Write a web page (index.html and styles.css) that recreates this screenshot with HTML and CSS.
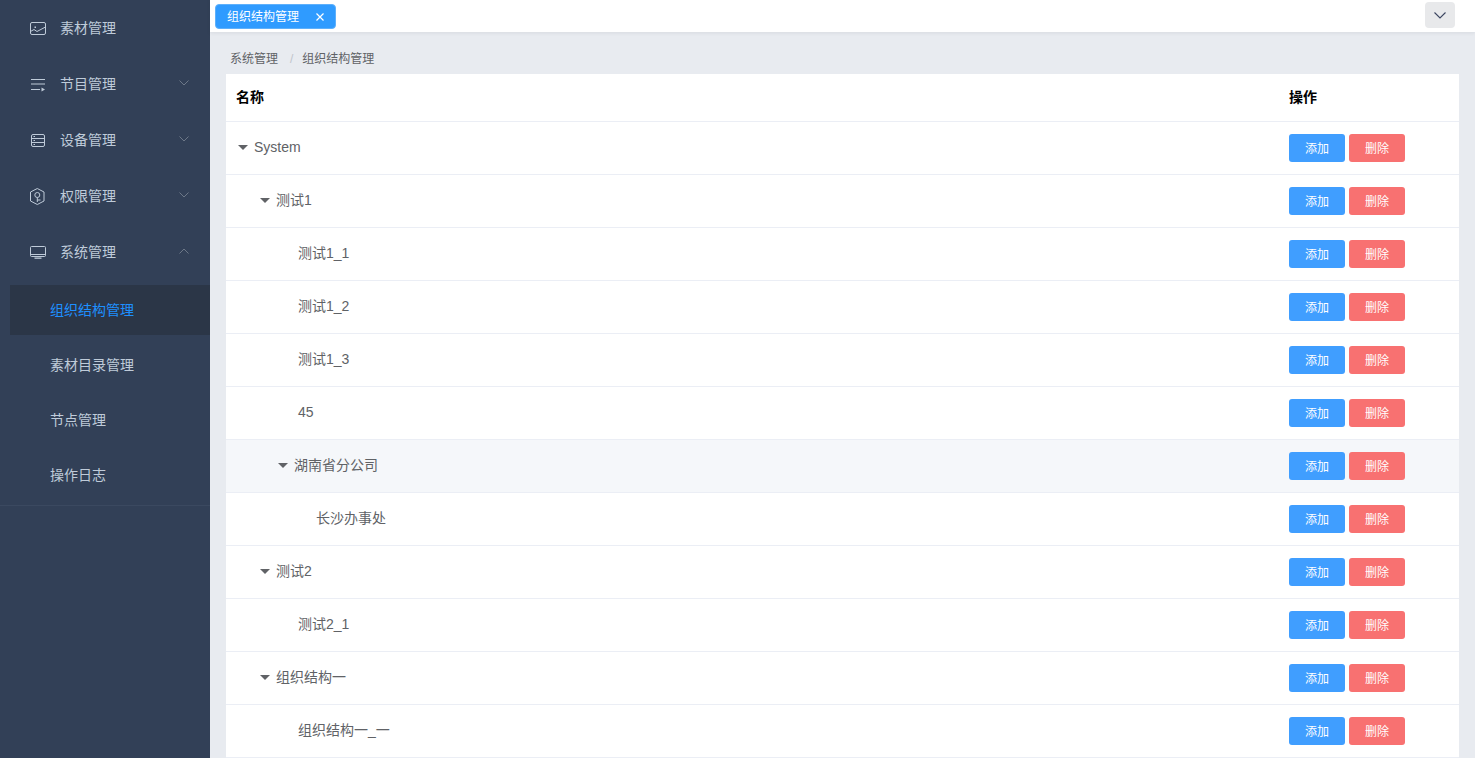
FILE: index.html
```html
<!DOCTYPE html>
<html lang="zh-CN">
<head>
<meta charset="utf-8">
<title>组织结构管理</title>
<link rel="stylesheet" href="styles.css">
</head>
<body>
<div class="app">
  <aside class="sidebar">
    <ul class="menu">
      <li class="menu-item"><svg class="menu-icon" viewBox="0 0 16 16"><rect x="0.5" y="2.5" width="15" height="12" rx="1.5"/><path d="M0.5 11.5L4 9.5L7 11.5L15.5 7"/><path class="fill" d="M4.5 6.5H6V8H4.5Z"/></svg><span>素材管理</span></li>
      <li class="menu-item"><svg class="menu-icon" viewBox="0 0 16 16"><path d="M1 3.5H15M1 8H15M1 13.5H10"/><path class="fill" d="M11.5 11.5L15 13.5L11.5 15.5Z"/></svg><span>节目管理</span><svg class="chev" viewBox="0 0 10 6"><path d="M0.5 0.5L5 5L9.5 0.5"/></svg></li>
      <li class="menu-item"><svg class="menu-icon" viewBox="0 0 16 16"><rect x="1.5" y="2.5" width="13" height="12" rx="1.5"/><path d="M1.5 6.5H14.5M1.5 10.5H14.5M3.5 4.5H5M3.5 8.5H5M3.5 12.5H5"/></svg><span>设备管理</span><svg class="chev" viewBox="0 0 10 6"><path d="M0.5 0.5L5 5L9.5 0.5"/></svg></li>
      <li class="menu-item"><svg class="menu-icon" viewBox="0 0 16 16"><path d="M7.3 0.5L14 4V13L7.3 16.5L0.5 13V4Z"/><circle cx="7.3" cy="7" r="2.5"/><path d="M7.3 9.5V14M7.3 12H10.5"/></svg><span>权限管理</span><svg class="chev" viewBox="0 0 10 6"><path d="M0.5 0.5L5 5L9.5 0.5"/></svg></li>
      <li class="menu-item"><svg class="menu-icon" viewBox="0 0 16 16"><rect x="0.5" y="2.5" width="15" height="10" rx="1"/><path d="M0.5 10.5H15.5"/><path class="fill" d="M4.5 13.5H11.5V14.8H4.5Z"/></svg><span>系统管理</span><svg class="chev" viewBox="0 0 10 6"><path d="M0.5 5.5L5 1L9.5 5.5"/></svg></li>
    </ul>
    <ul class="submenu">
      <li class="sub-item active">组织结构管理</li>
      <li class="sub-item">素材目录管理</li>
      <li class="sub-item">节点管理</li>
      <li class="sub-item">操作日志</li>
    </ul>
  </aside>
  <main class="main">
    <header class="tabbar">
      <div class="tab"><span>组织结构管理</span><svg class="tab-close" viewBox="0 0 8 8"><path d="M0.5 0.5L7.5 7.5M7.5 0.5L0.5 7.5"/></svg></div>
      <button class="more" type="button"><svg viewBox="0 0 12 7"><path d="M0.5 0.5L6 6L11.5 0.5"/></svg></button>
    </header>
    <section class="content">
      <nav class="breadcrumb"><span>系统管理</span><i>/</i><span>组织结构管理</span></nav>
      <table class="tree-table">
        <thead><tr><th>名称</th><th class="ops">操作</th></tr></thead>
        <tbody>
          <tr><td><div class="node latin l0"><b class="caret"></b>System</div></td><td class="ops"><button class="btn add" type="button">添加</button><button class="btn del" type="button">删除</button></td></tr>
          <tr><td><div class="node l1"><b class="caret"></b>测试1</div></td><td class="ops"><button class="btn add" type="button">添加</button><button class="btn del" type="button">删除</button></td></tr>
          <tr><td><div class="node l2">测试1_1</div></td><td class="ops"><button class="btn add" type="button">添加</button><button class="btn del" type="button">删除</button></td></tr>
          <tr><td><div class="node l2">测试1_2</div></td><td class="ops"><button class="btn add" type="button">添加</button><button class="btn del" type="button">删除</button></td></tr>
          <tr><td><div class="node l2">测试1_3</div></td><td class="ops"><button class="btn add" type="button">添加</button><button class="btn del" type="button">删除</button></td></tr>
          <tr><td><div class="node latin l2">45</div></td><td class="ops"><button class="btn add" type="button">添加</button><button class="btn del" type="button">删除</button></td></tr>
          <tr class="hover"><td><div class="node l2c"><b class="caret"></b>湖南省分公司</div></td><td class="ops"><button class="btn add" type="button">添加</button><button class="btn del" type="button">删除</button></td></tr>
          <tr><td><div class="node l3">长沙办事处</div></td><td class="ops"><button class="btn add" type="button">添加</button><button class="btn del" type="button">删除</button></td></tr>
          <tr><td><div class="node l1"><b class="caret"></b>测试2</div></td><td class="ops"><button class="btn add" type="button">添加</button><button class="btn del" type="button">删除</button></td></tr>
          <tr><td><div class="node l2">测试2_1</div></td><td class="ops"><button class="btn add" type="button">添加</button><button class="btn del" type="button">删除</button></td></tr>
          <tr><td><div class="node l1"><b class="caret"></b>组织结构一</div></td><td class="ops"><button class="btn add" type="button">添加</button><button class="btn del" type="button">删除</button></td></tr>
          <tr><td><div class="node l2">组织结构一_一</div></td><td class="ops"><button class="btn add" type="button">添加</button><button class="btn del" type="button">删除</button></td></tr>
        </tbody>
      </table>
    </section>
  </main>
</div>
</body>
</html>
```
FILE: styles.css
```css
* { box-sizing: border-box; }
html, body { margin: 0; height: 100%; overflow: hidden; }
body { font-family: "Liberation Sans", "Noto Sans CJK SC", sans-serif; font-size: 14px; color: #606266; }
ul { list-style: none; margin: 0; padding: 0; }
.app { display: flex; height: 758px; }

.sidebar { width: 210px; flex: none; background: #324057; color: #bfcbd9; }
.menu-item { height: 56px; display: flex; align-items: center; padding-left: 30px; padding-right: 21px; }
.menu-item span { padding-bottom: 2px; }
.menu-icon { width: 16px; height: 16px; margin-right: 14px; fill: none; stroke: #bfcbd9; stroke-width: 1; flex: none; overflow: visible; }
.menu-icon .fill { fill: #bfcbd9; stroke: none; }
.chev { width: 10px; height: 6px; margin-left: auto; margin-top: -3px; fill: none; stroke: #6d7888; stroke-width: 1; }
.submenu { border-bottom: 1px solid #3b4960; padding: 5px 0; }
.sub-item { height: 50px; margin-left: 10px; padding: 0 0 2px 40px; display: flex; align-items: center; }
.sub-item + .sub-item { margin-top: 5px; }
.sub-item.active { background: #2b3647; color: #1e90ff; }

.main { flex: 1; min-width: 0; background: #e8ebf0; display: flex; flex-direction: column; }
.tabbar { height: 32px; flex: none; background: #fff; display: flex; align-items: center; justify-content: space-between; padding: 0 20px 0 5px; box-shadow: 0 1px 4px rgba(0, 21, 41, .08); position: relative; }
.tab { width: 121px; height: 25px; margin-top: 1px; background: #2f9bff; border: 1px solid #5eb0fb; border-radius: 4px; color: #fff; font-size: 12px; display: flex; align-items: center; padding: 0 0 3px 11px; }
.tab-close { width: 8px; height: 8px; margin: 3px 0 0 17px; fill: none; stroke: #fff; stroke-width: 1.2; }
.more { width: 30px; height: 26px; margin-bottom: 2px; border: 0; padding: 0; background: #e8e9eb; border-radius: 4px; display: flex; align-items: center; justify-content: center; }
.more svg { width: 12px; height: 7px; fill: none; stroke: #3b4560; stroke-width: 1.1; }

.content { flex: 1; padding: 0 16px; min-height: 0; }
.breadcrumb { height: 42px; padding: 19px 4px 0; font-size: 12px; line-height: 16px; color: #606266; display: flex; }
.breadcrumb i { font-style: normal; color: #c0c4cc; margin: 0 9px 0 12px; }

.tree-table { width: 100%; table-layout: fixed; border-collapse: separate; border-spacing: 0; background: #fff; font-size: 14px; }
.tree-table th { height: 48px; text-align: left; padding: 0 10px 4px; color: #000; font-weight: 700; font-size: 14px; border-bottom: 1px solid #ebeef5; }
.tree-table td { height: 53px; padding: 0 10px; border-bottom: 1px solid #ebeef5; }
.tree-table .ops { width: 180px; }
.hover td { background: #f5f7fa; }

.node { display: flex; align-items: center; padding-bottom: 4px; }
.node.latin { padding-bottom: 2px; }
.caret { width: 0; height: 0; border-style: solid; border-width: 5px 5px 0; border-color: #606266 transparent transparent; margin: 2px 6px 0 0; }
.latin .caret { margin-top: 0; }
.l0 { padding-left: 2px; }
.l1 { padding-left: 24px; }
.l2 { padding-left: 62px; }
.l2c { padding-left: 42px; }
.l3 { padding-left: 80px; }

.btn { width: 56px; height: 28px; border: 0; border-radius: 3px; color: #fff; font-family: inherit; font-size: 12px; padding: 0 0 2px; margin: 0; display: inline-block; vertical-align: middle; }
.btn + .btn { margin-left: 4px; }
.add { background: #409eff; }
.del { background: #f87171; }
```
